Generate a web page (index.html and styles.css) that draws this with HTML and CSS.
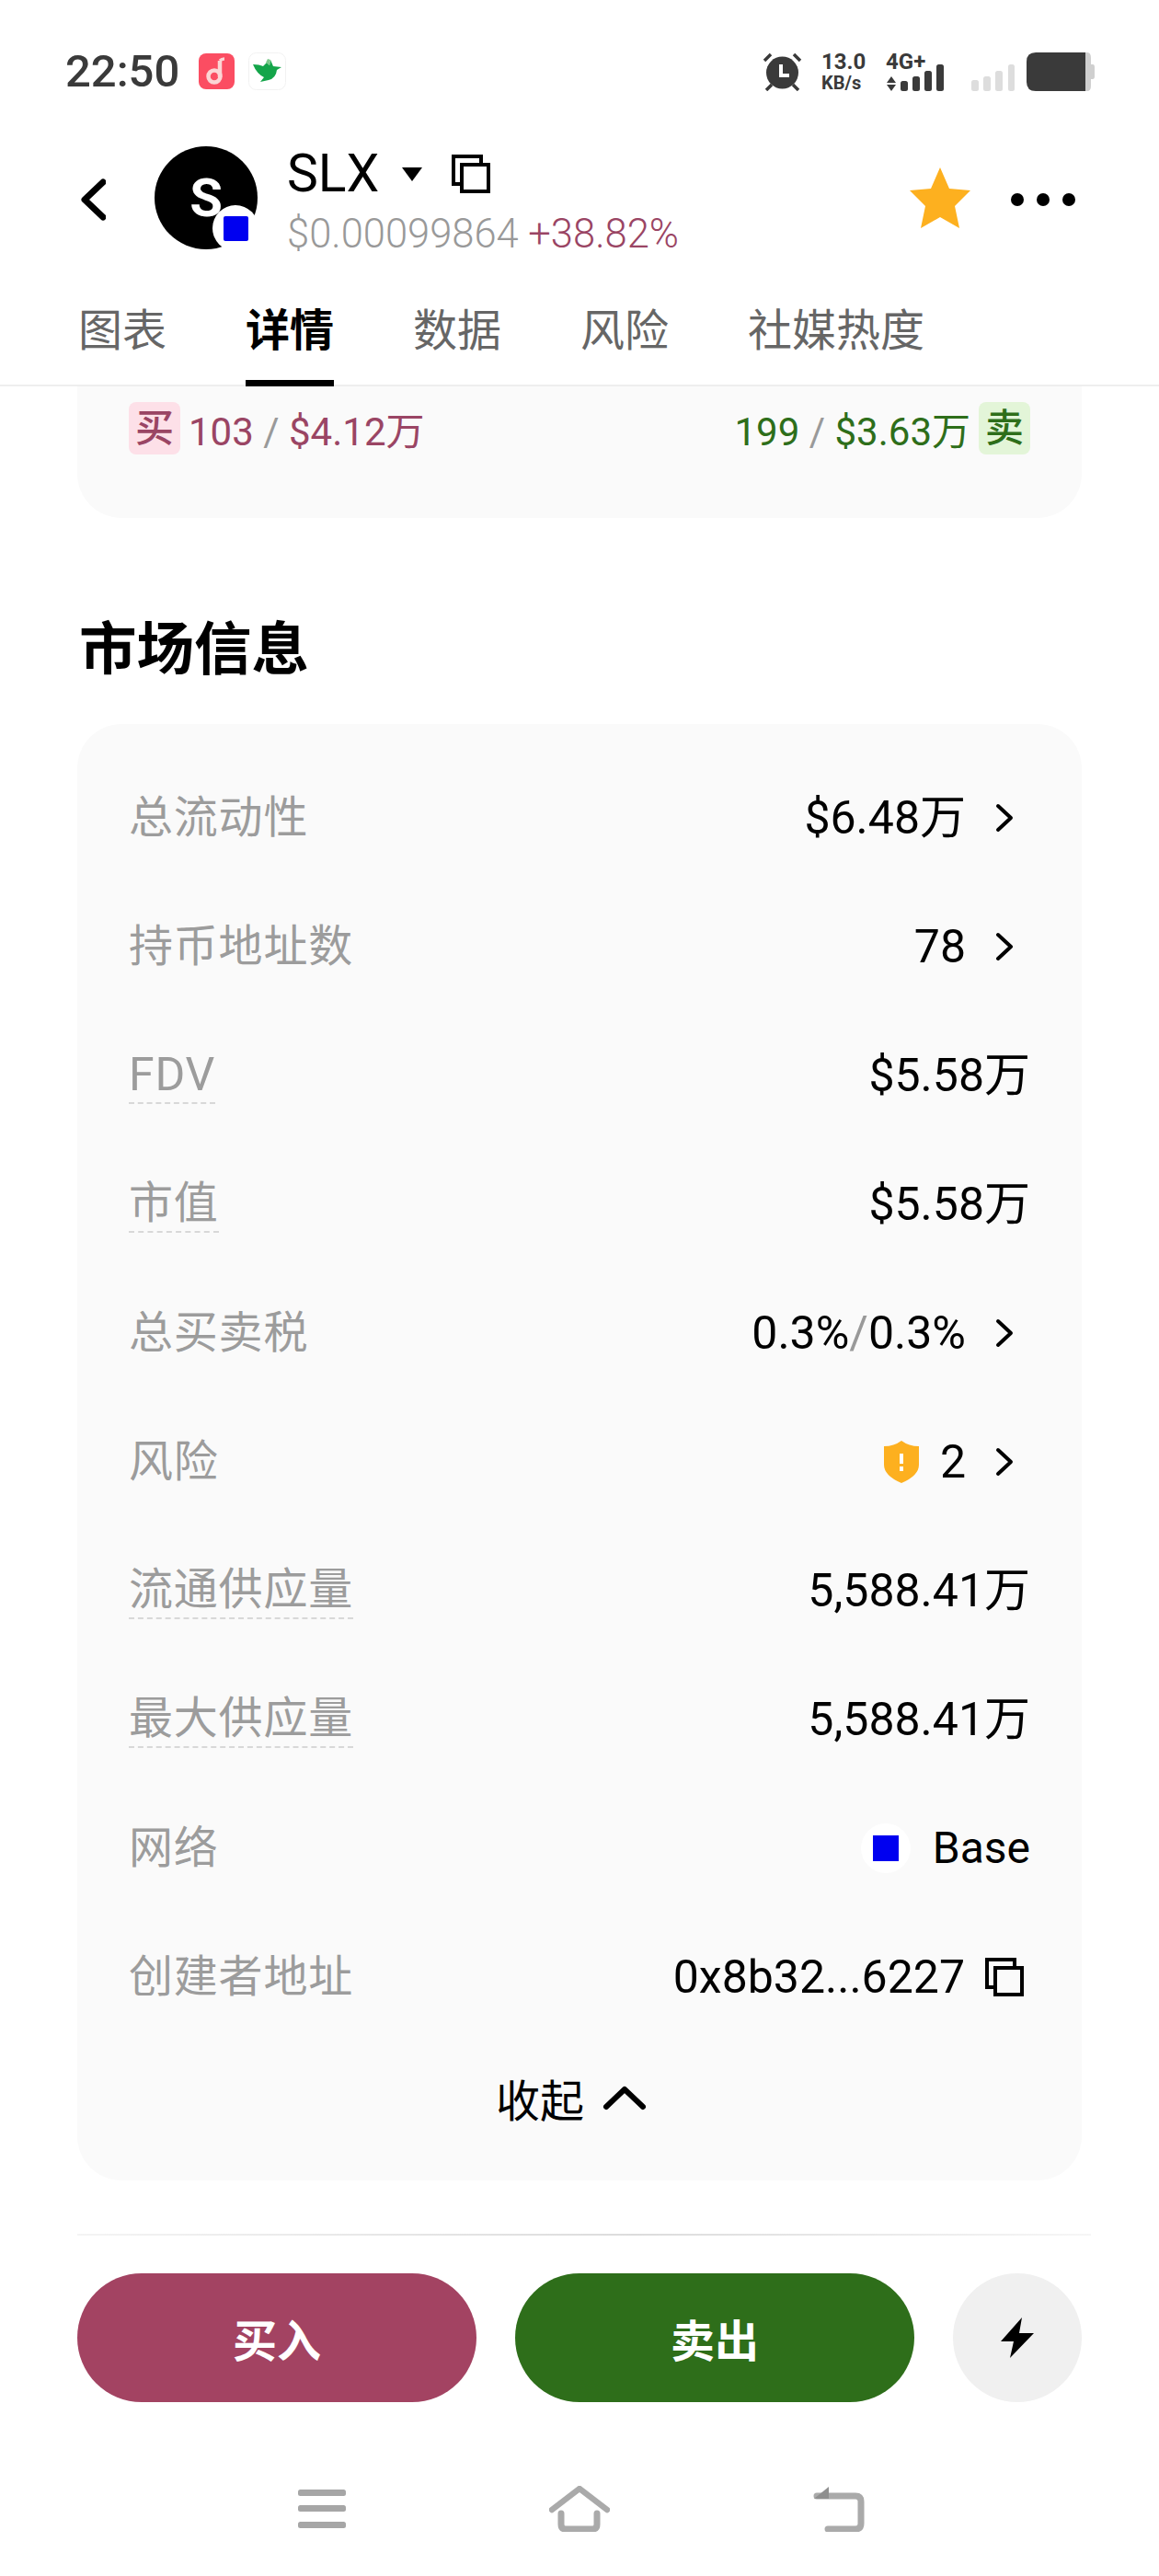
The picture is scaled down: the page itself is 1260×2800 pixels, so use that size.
FILE: index.html
```html
<!DOCTYPE html>
<html lang="zh-CN">
<head>
  <meta charset="UTF-8" />
  <meta name="viewport" content="width=device-width, initial-scale=1.0"/>
  <title>SLX - 详情</title>
  <link rel="stylesheet" href="styles.css">
</head>
<body>
  <!-- status bar -->
  <div class="status">
    <div class="status-left">
      <span class="time">22:50</span>
      <svg class="app-icon music" width="39" height="39" viewBox="0 0 39 39">
        <rect width="39" height="39" rx="8" fill="#fb4d62"/>
        <path d="M23 8v18" stroke="#fbd5d5" stroke-width="4.5" fill="none"/>
        <path d="M23 8q2-2 5-2" stroke="#fbd5d5" stroke-width="3.5" fill="none"/>
        <circle cx="17" cy="25" r="6.5" stroke="#fbd5d5" stroke-width="4.5" fill="none"/>
      </svg>
      <svg class="app-icon" width="41" height="41" viewBox="0 0 41 41">
        <rect x=".5" y=".5" width="40" height="40" rx="8" fill="#fff" stroke="#f2f2f2"/>
        <path d="M5 13q7 0 11 2l4-4 3 3 1-6 3 7 9 1-5 3q-1 9-9 11l-9 2 4-5q-8-4-12-14z" fill="#14a54a"/>
        <path d="M19 11l2-4 3 1-1 6z" fill="#7cc98a"/>
      </svg>
    </div>
    <div class="status-right">
      <svg class="alarm" width="43" height="42" viewBox="0 0 43 42">
        <circle cx="21.5" cy="22" r="17.5" fill="#3a3a3a"/>
        <path d="M2 9 9 2M41 9 34 2M4 41l6-6M39 41l-6-6" stroke="#3a3a3a" stroke-width="3.5"/>
        <path d="M20 13v12h9" stroke="#fff" stroke-width="4" fill="none"/>
      </svg>
      <div class="speed">
        <span class="speed-num">13.0</span>
        <span class="speed-unit">KB/s</span>
      </div>
      <div class="net">
        <span class="net-text">4G+</span>
        <svg width="63" height="42" viewBox="0 0 63 42">
          <path d="M6 26l5 7H1zM6 42l5-7H1z" fill="#3a3a3a"/>
          <rect x="16" y="31" width="8" height="11" rx="2.5" fill="#3a3a3a"/>
          <rect x="29" y="26" width="8" height="16" rx="2.5" fill="#3a3a3a"/>
          <rect x="42" y="20" width="8" height="22" rx="2.5" fill="#3a3a3a"/>
          <rect x="55" y="13" width="8" height="29" rx="2.5" fill="#3a3a3a"/>
        </svg>
      </div>
      <svg class="net-off" width="47" height="29" viewBox="0 0 47 29">
        <rect x="0" y="17" width="8" height="12" rx="2.5" fill="#ddd"/>
        <rect x="13" y="13" width="8" height="16" rx="2.5" fill="#ddd"/>
        <rect x="26" y="7" width="8" height="22" rx="2.5" fill="#ddd"/>
        <rect x="40" y="0" width="7" height="29" rx="2.5" fill="#ddd"/>
      </svg>
      <svg class="battery" width="74" height="42" viewBox="0 0 74 42">
        <path d="M60 0h6q4 0 4 6v7h2q2 0 2 3v10q0 3-2 3h-2v7q0 6-4 6h-6z" fill="#cfcfcf"/>
        <path d="M10 0h54v42H10Q0 42 0 32V10Q0 0 10 0z" fill="#3a3a3a"/>
      </svg>
    </div>
  </div>

  <!-- token header -->
  <header class="head">
    <svg class="back" width="27" height="46" viewBox="0 0 27 46">
      <path d="M24 4 4 23l20 19" stroke="#000" stroke-width="7" fill="none" stroke-linecap="round" stroke-linejoin="round"/>
    </svg>
    <div class="avatar">
      S
      <span class="badge"><i class="badge-sq"></i></span>
    </div>
    <div class="token">
      <div class="token-top">
        <span class="token-name">SLX</span>
        <svg class="caret" width="22" height="15" viewBox="0 0 22 15"><path d="M0 0h22L11 15z" fill="#000"/></svg>
        <svg class="copy" width="42" height="42" viewBox="0 0 42 42">
          <path d="M2 2h30v30H2z" fill="#fff" stroke="#000" stroke-width="4"/>
          <path d="M11 11h29v29H11z" fill="#fff" stroke="#000" stroke-width="4"/>
        </svg>
      </div>
      <div class="token-price">$0.00099864 <span class="up">+38.82%</span></div>
    </div>
    <svg class="star" width="66" height="66" viewBox="0 0 66 66">
      <path d="M33 0l10 23 23 2-17 17 5 24-21-12-21 12 5-24L0 25l23-2z" fill="#fdb01f"/>
    </svg>
    <div class="more"><i></i><i></i><i></i></div>
  </header>

  <nav class="tabs">
    <a>图表</a>
    <a class="active">详情</a>
    <a>数据</a>
    <a>风险</a>
    <a>社媒热度</a>
  </nav>

  <!-- tail of the previous card -->
  <section class="card trades">
    <div class="trade buy"><span class="tag">买</span><span>103 <em>/</em> $4.12万</span></div>
    <div class="trade sell"><span>199 <em>/</em> $3.63万</span><span class="tag">卖</span></div>
  </section>

  <h2 class="section-title">市场信息</h2>

  <section class="card info">
    <div class="row">
      <span class="label">总流动性</span>
      <span class="value">$6.48万<svg class="chev" width="20" height="32" viewBox="0 0 20 32"><path d="M3 3l14 13L3 29" stroke="#000" stroke-width="4" fill="none" stroke-linecap="round" stroke-linejoin="round"/></svg></span>
    </div>
    <div class="row">
      <span class="label">持币地址数</span>
      <span class="value">78<svg class="chev" width="20" height="32" viewBox="0 0 20 32"><path d="M3 3l14 13L3 29" stroke="#000" stroke-width="4" fill="none" stroke-linecap="round" stroke-linejoin="round"/></svg></span>
    </div>
    <div class="row">
      <span class="label dashed label-en">FDV</span>
      <span class="value">$5.58万</span>
    </div>
    <div class="row">
      <span class="label dashed">市值</span>
      <span class="value">$5.58万</span>
    </div>
    <div class="row">
      <span class="label">总买卖税</span>
      <span class="value">0.3%<em>/</em>0.3%<svg class="chev" width="20" height="32" viewBox="0 0 20 32"><path d="M3 3l14 13L3 29" stroke="#000" stroke-width="4" fill="none" stroke-linecap="round" stroke-linejoin="round"/></svg></span>
    </div>
    <div class="row">
      <span class="label">风险</span>
      <span class="value">
        <svg class="shield" width="38" height="46" viewBox="0 0 38 46">
          <path d="M19 0q8 6 19 6v20q0 12-19 20Q0 38 0 26V6q11 0 19-6z" fill="#fdb01f"/>
          <path d="M17 14h4v11h-4zM17 28h4v5h-4z" fill="#fff"/>
        </svg>2<svg class="chev" width="20" height="32" viewBox="0 0 20 32"><path d="M3 3l14 13L3 29" stroke="#000" stroke-width="4" fill="none" stroke-linecap="round" stroke-linejoin="round"/></svg>
      </span>
    </div>
    <div class="row">
      <span class="label dashed">流通供应量</span>
      <span class="value">5,588.41万</span>
    </div>
    <div class="row">
      <span class="label dashed">最大供应量</span>
      <span class="value">5,588.41万</span>
    </div>
    <div class="row">
      <span class="label">网络</span>
      <span class="value"><span class="chain"><i class="chain-sq"></i></span><span class="chain-name">Base</span></span>
    </div>
    <div class="row">
      <span class="label">创建者地址</span>
      <span class="value">0x8b32...6227<svg class="copy-sm" width="42" height="42" viewBox="0 0 42 42"><path d="M2 2h30v30H2z" fill="#fafafa" stroke="#000" stroke-width="4"/><path d="M11 11h29v29H11z" fill="#fafafa" stroke="#000" stroke-width="4"/></svg></span>
    </div>
    <div class="collapse">收起
      <svg width="48" height="28" viewBox="0 0 48 28"><path d="M4 24 24 5l20 19" stroke="#000" stroke-width="6" fill="none" stroke-linecap="round" stroke-linejoin="round"/></svg>
    </div>
  </section>

  <div class="divider"></div>

  <div class="actions">
    <button class="btn btn-buy">买入</button>
    <button class="btn btn-sell">卖出</button>
    <button class="btn-bolt">
      <svg width="36" height="44" viewBox="0 0 36 44"><path d="M23 0 0 26h14l-4 18L36 17H20z" fill="#000"/></svg>
    </button>
  </div>

  <!-- android nav keys -->
  <div class="keys">
    <svg width="52" height="42" viewBox="0 0 52 42">
      <rect width="52" height="7" rx="2.5" fill="#a6a6a6"/>
      <rect y="17" width="52" height="7" rx="2.5" fill="#a6a6a6"/>
      <rect y="35" width="52" height="7" rx="2.5" fill="#a6a6a6"/>
    </svg>
    <svg width="66" height="50" viewBox="0 0 66 50">
      <path d="M3 26 33 3l30 23" stroke="#aaa" stroke-width="6.5" fill="none" stroke-linecap="round" stroke-linejoin="round"/>
      <path d="M13 30v12q0 5 5 5h29q5 0 5-5V30" stroke="#aaa" stroke-width="7" fill="none" stroke-linecap="round"/>
    </svg>
    <svg width="56" height="50" viewBox="0 0 56 50">
      <path d="M4 11h42q6 0 6 6v24q0 6-6 6H16" stroke="#aaa" stroke-width="7" fill="none" stroke-linecap="round"/>
      <path d="M1 14 17 1v13z" fill="#8f8f8f"/>
    </svg>
  </div>
</body>
</html>
```

FILE: styles.css
```css
* {
  box-sizing: border-box;
}
body {
  margin: 0;
  width: 1260px;
  height: 2800px;
  overflow: hidden;
  background: #fff;
  color: #000;
  font-family: Roboto, "Noto Sans CJK SC", sans-serif;
}
svg {
  display: block;
  flex: none;
}
em {
  font-style: normal;
  color: #999;
}

/* status bar */
.status {
  height: 130px;
  padding: 57px 70px 0 71px;
  display: flex;
  justify-content: space-between;
  align-items: flex-start;
}
.status-left {
  display: flex;
  align-items: center;
  height: 41px;
}
.time {
  font-size: 49px;
  line-height: 41px;
  font-weight: 500;
  color: #3a3a3a;
  margin-right: 21px;
}
.music {
  margin-right: 15px;
}
.status-right {
  display: flex;
  align-items: flex-end;
  height: 42px;
}
.speed {
  width: 50px;
  margin: 0 20px 0 21px;
  color: #3a3a3a;
  font-weight: 700;
}
.speed-num {
  display: block;
  font-size: 24px;
  line-height: 20px;
  margin-bottom: 5px;
}
.speed-unit {
  display: block;
  font-size: 20px;
  line-height: 17px;
}
.net {
  position: relative;
  margin-right: 30px;
}
.net-text {
  position: absolute;
  left: 0;
  top: 0;
  font-size: 24px;
  line-height: 20px;
  font-weight: 700;
  color: #3a3a3a;
}
.net-off {
  margin-right: 13px;
}

/* token header */
.head {
  height: 170px;
  padding: 0 91px 0 88px;
  display: flex;
  align-items: center;
}
.back {
  margin: 3px 53px 0 0;
}
.avatar {
  position: relative;
  width: 112px;
  height: 112px;
  border-radius: 50%;
  background: #000;
  color: #fff;
  font-size: 58px;
  font-weight: 700;
  line-height: 112px;
  text-align: center;
  margin-right: 32px;
}
.badge {
  position: absolute;
  right: -1px;
  bottom: -2px;
  width: 50px;
  height: 50px;
  border-radius: 50%;
  background: #fff;
  display: flex;
  align-items: center;
  justify-content: center;
}
.badge-sq {
  width: 27px;
  height: 27px;
  border-radius: 2px;
  background: #0000f0;
}
.token {
  margin-top: 14px;
}
.token-top {
  display: flex;
  align-items: center;
  height: 66px;
}
.token-name {
  font-size: 57px;
  line-height: 66px;
  margin-right: 25px;
}
.caret {
  margin-right: 32px;
}
.token-price {
  font-size: 43.5px;
  line-height: 66px;
  font-weight: 300;
  color: #999;
  white-space: nowrap;
}
.up {
  color: #9a4564;
}
.star {
  margin-left: auto;
  margin-right: 44px;
}
.more {
  display: flex;
  gap: 14px;
  margin-top: 3px;
}
.more i {
  width: 14px;
  height: 14px;
  border-radius: 50%;
  background: #000;
}

/* tabs */
.tabs {
  height: 120px;
  padding-left: 85px;
  display: flex;
  gap: 86px;
  border-bottom: 2px solid #eee;
}
.tabs a {
  height: 120px;
  padding-top: 31px;
  font-size: 48px;
  line-height: 58px;
  color: #666;
}
.tabs .active {
  color: #000;
  font-weight: 700;
  border-bottom: 7px solid #000;
}

/* cards */
.card {
  margin: 0 84px;
  background: #fafafa;
}
.trades {
  height: 143px;
  padding: 17px 56px 0;
  border-radius: 0 0 48px 48px;
  display: flex;
  justify-content: space-between;
  align-items: flex-start;
}
.trade {
  display: flex;
  align-items: center;
  gap: 9px;
  height: 57px;
  font-size: 42px;
  white-space: nowrap;
}
.buy {
  color: #9a4564;
}
.sell {
  color: #2e6e1a;
}
.tag {
  width: 56px;
  height: 57px;
  border-radius: 8px;
  text-align: center;
  font-size: 42px;
  font-weight: 500;
  line-height: 57px;
}
.buy .tag {
  background: #fde0e8;
}
.sell .tag {
  background: #e3f5d8;
}
.section-title {
  margin: 104px 0 40px 86px;
  font-size: 62.5px;
  line-height: 80px;
  font-weight: 700;
}
.info {
  height: 1583px;
  padding: 32px 56px 0 56px;
  border-radius: 48px;
}
.row {
  height: 140px;
  display: flex;
  justify-content: space-between;
  align-items: center;
}
.label {
  font-size: 48px;
  line-height: 58px;
  letter-spacing: .8px;
  color: #9c9c9c;
}
.label-en {
  font-size: 50px;
}
.dashed {
  padding-bottom: 1px;
  border-bottom: 2px dashed #d8d8d8;
}
.value {
  display: flex;
  align-items: center;
  font-size: 50px;
  line-height: 58px;
}
.chev {
  margin: 0 18px 0 32px;
}
.shield {
  margin-right: 23px;
}
.chain {
  width: 54px;
  height: 54px;
  margin-right: 24px;
  border-radius: 50%;
  background: #fff;
  display: flex;
  align-items: center;
  justify-content: center;
}
.chain-sq {
  width: 28px;
  height: 28px;
  background: #0000f0;
}
.chain-name {
  font-size: 48px;
}
.copy-sm {
  margin-left: 22px;
  margin-right: 7px;
}
.collapse {
  height: 122px;
  padding-right: 18px;
  display: flex;
  justify-content: center;
  align-items: center;
  gap: 20px;
  font-size: 48px;
}
.divider {
  height: 2px;
  margin: 58px 74px 0 84px;
  background: linear-gradient(90deg, #f4f4f4, #dcdcdc 55%, #f6f6f6);
}

/* buy / sell bar */
.actions {
  margin: 41px 84px 0;
  display: flex;
  gap: 42px;
}
.btn {
  width: 434px;
  height: 140px;
  border: 0;
  border-radius: 70px;
  color: #fff;
  font-family: inherit;
  font-size: 48px;
  font-weight: 700;
}
.btn-buy {
  background: #a34362;
}
.btn-sell {
  background: #2e6e1a;
}
.btn-bolt {
  width: 140px;
  height: 140px;
  border: 0;
  border-radius: 50%;
  background: #f0f0f0;
  display: flex;
  align-items: center;
  justify-content: center;
}

.keys {
  margin-top: 91px;
  padding-left: 324px;
  display: flex;
  align-items: center;
  gap: 221px;
}
```
